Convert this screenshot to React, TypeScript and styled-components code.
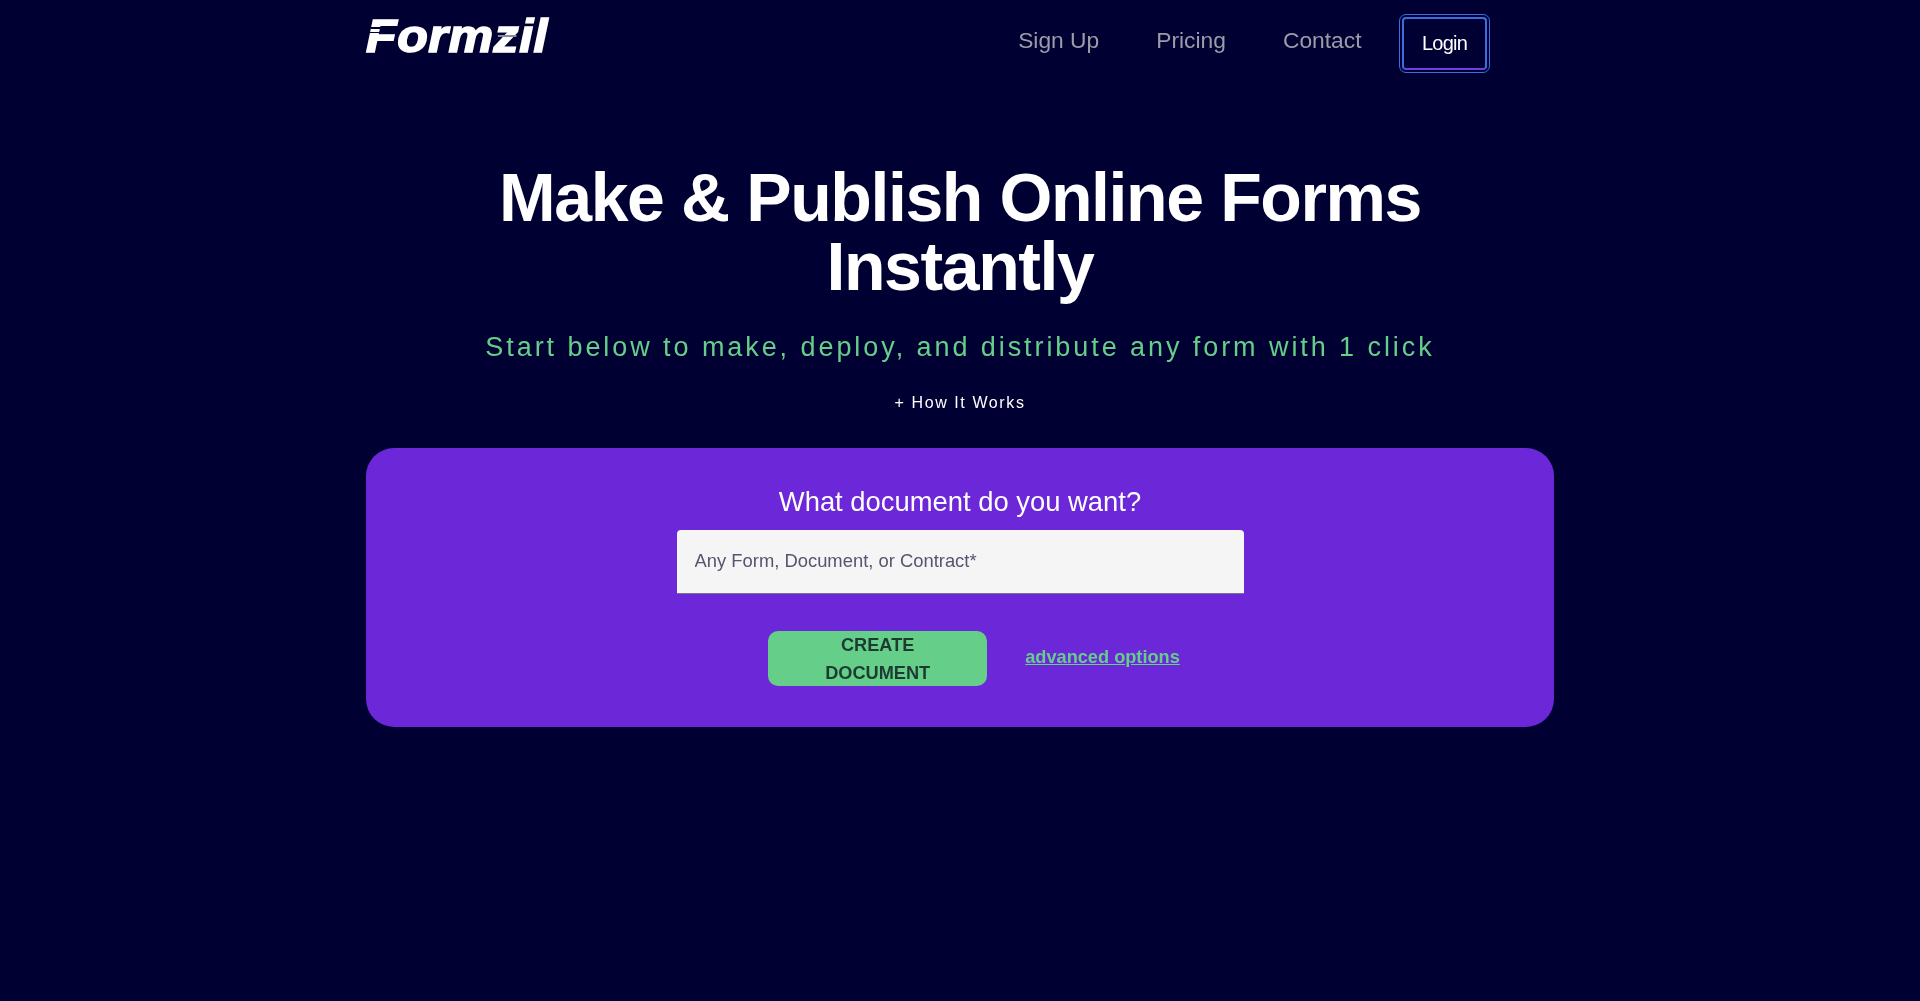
import { createGlobalStyle, styled } from 'styled-components';

const GlobalStyle = createGlobalStyle`
  html, body {
    margin: 0;
    background: #000033;
    font-family: "Liberation Sans", Arial, sans-serif;
  }
  #root {
    min-height: 1001px;
  }
`;

const Page = styled.div`
  width: 1188px;
  margin: 0 auto;
  will-change: transform;
`;

const Header = styled.header`
  display: flex;
  align-items: flex-start;
  justify-content: space-between;
  height: 93px;
  padding-right: 67px;
`;

const Logo = styled.a`
  position: relative;
  display: block;
  margin-top: 9px;
  color: #fff;
  font-size: 46px;
  line-height: 54px;
  font-weight: 700;
  font-style: italic;
  letter-spacing: 0.5px;
  -webkit-text-stroke: 1.6px #fff;
  transform: scaleX(1.09);
  transform-origin: left center;
`;

const LogoStripe = styled.span<{ $left: number; $top: number; $width: number; $tone?: string }>`
  position: absolute;
  left: ${(p) => p.$left}px;
  top: ${(p) => p.$top}px;
  width: ${(p) => p.$width}px;
  height: 1.5px;
  background: ${(p) => p.$tone ?? '#000033'};
`;

const Nav = styled.nav`
  display: flex;
  align-items: center;
  gap: 57px;
  padding-top: 17px;
`;

const NavLink = styled.a`
  color: #9b9ca8;
  font-size: 22.8px;
  line-height: 54px;
  margin-top: -8px;
`;

const LoginButton = styled.button`
  box-sizing: border-box;
  width: 85px;
  height: 53px;
  margin-left: -16.5px;
  background: transparent;
  color: #fff;
  font-family: inherit;
  font-size: 20px;
  letter-spacing: -0.8px;
  border: 2px solid #3b6fe0;
  border-bottom-color: #6d3fe0;
  border-radius: 4px;
  outline: 1px solid #3b6fe0;
  outline-offset: 2px;
`;

const Hero = styled.section`
  display: flex;
  flex-direction: column;
  align-items: center;
  text-align: center;
`;

const Title = styled.h1`
  margin: 70px 0 0;
  width: 1000px;
  color: #fff;
  font-size: 68px;
  line-height: 69px;
  font-weight: 700;
  letter-spacing: -1.4px;
`;

const Subtitle = styled.p`
  margin: 28px 0 0;
  color: #65cf89;
  font-size: 27px;
  line-height: 36px;
  letter-spacing: 2.93px;
`;

const HowItWorks = styled.a`
  display: block;
  margin-top: 27px;
  color: #fff;
  font-size: 16px;
  line-height: 22px;
  letter-spacing: 1.6px;
`;

const Card = styled.form`
  display: flex;
  flex-direction: column;
  align-items: center;
  box-sizing: border-box;
  height: 279px;
  margin-top: 34px;
  padding-top: 37px;
  background: #6b27d8;
  border-radius: 28px;
`;

const Question = styled.label`
  color: #fff;
  font-size: 27.4px;
  line-height: 34px;
`;

const DocInput = styled.input`
  box-sizing: border-box;
  width: 567px;
  height: 64px;
  margin-top: 11px;
  padding: 0 18px 2px;
  background: #f5f5f5;
  color: #50506a;
  font-family: inherit;
  font-size: 18.4px;
  border: 0;
  border-bottom: 1px solid #77728a;
  border-radius: 4px 4px 0 0;

  &::placeholder {
    color: #55556f;
    opacity: 1;
  }
`;

const Actions = styled.div`
  display: flex;
  align-items: center;
  gap: 38px;
  margin-top: 37px;
  padding-left: 28px;
`;

const CreateButton = styled.button`
  box-sizing: border-box;
  width: 219px;
  height: 55px;
  padding: 0 40px 2px;
  background: #65cf89;
  color: #1d3b33;
  font-family: inherit;
  font-size: 18.2px;
  font-weight: 700;
  line-height: 28px;
  border: 0;
  border-radius: 10px;
`;

const AdvancedLink = styled.a`
  margin-top: -3px;
  color: #65cf89;
  font-size: 18.2px;
  font-weight: 700;
  text-decoration: underline;
`;

export default function App() {
  return (
    <Page>
      <GlobalStyle />
      <Header>
        <Logo>
          Formzil
          <LogoStripe $left={4} $top={18} $width={28} />
          <LogoStripe $left={3} $top={22.5} $width={24} />
          <LogoStripe $left={121} $top={26} $width={17} $tone="#8a8a9e" />
        </Logo>
        <Nav>
          <NavLink>Sign Up</NavLink>
          <NavLink>Pricing</NavLink>
          <NavLink>Contact</NavLink>
          <LoginButton type="button">Login</LoginButton>
        </Nav>
      </Header>
      <Hero>
        <Title>Make &amp; Publish Online Forms Instantly</Title>
        <Subtitle>Start below to make, deploy, and distribute any form with 1 click</Subtitle>
        <HowItWorks>+ How It Works</HowItWorks>
      </Hero>
      <Card>
        <Question>What document do you want?</Question>
        <DocInput placeholder="Any Form, Document, or Contract*" />
        <Actions>
          <CreateButton type="button">CREATE DOCUMENT</CreateButton>
          <AdvancedLink>advanced options</AdvancedLink>
        </Actions>
      </Card>
    </Page>
  );
}
